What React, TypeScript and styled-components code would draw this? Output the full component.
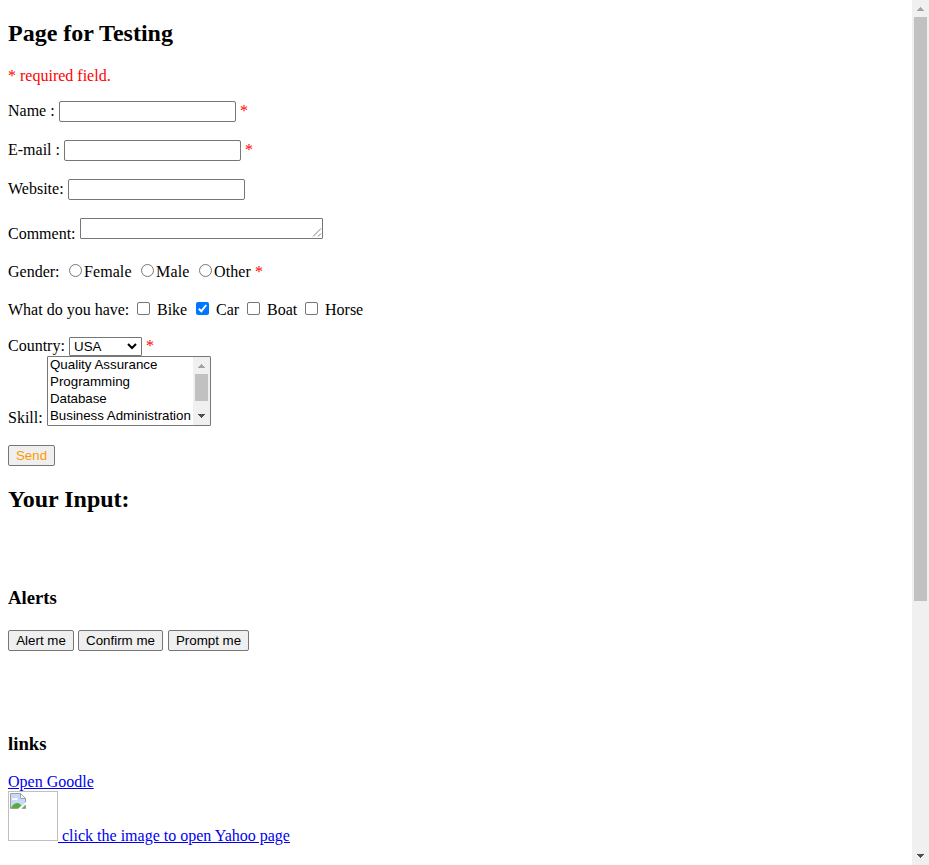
import React from 'react';
import styled, { createGlobalStyle } from 'styled-components';

const GlobalStyle = createGlobalStyle`
  html, body { margin: 0; padding: 0; background: #fff; overflow: hidden; }
  * { box-sizing: border-box; }
`;

const Page = styled.div`
  display: flex;
  width: 929px;
  height: 865px;
  overflow: hidden;
  color: #000;
  background: #fff;
  font: 16px/18px 'Liberation Serif', 'Times New Roman', serif;
`;

const Content = styled.main`
  flex: 1;
  padding: 20px 8px 0;
`;

const Heading = styled.h2`
  margin: 0;
  height: 27px;
  font-size: 24px;
  line-height: 27px;
`;

const SubHeading = styled.h3<{ $gap: number }>`
  margin: ${p => p.$gap}px 0 0;
  height: 20px;
  font-size: 18.72px;
  line-height: 20px;
`;

const Required = styled.p`
  margin: 20px 0 16px;
  color: #f00;
`;

const Row = styled.div<{ $h: number; $gap?: number }>`
  display: flex;
  align-items: flex-start;
  height: ${p => p.$h}px;
  margin-top: ${p => p.$gap ?? 0}px;
`;

const Label = styled.label<{ $w: number; $drop?: number; $track?: number }>`
  flex: none;
  width: ${p => p.$w}px;
  margin-top: ${p => p.$drop ?? 0}px;
  letter-spacing: ${p => p.$track ?? 0}px;
  white-space: nowrap;
`;

const Star = styled.span<{ $drop?: number }>`
  margin: ${p => p.$drop ?? 0}px 0 0 4px;
  color: #f00;
`;

const TextInput = styled.input`
  width: 177px;
  height: 21px;
  padding: 1px 2px;
  border: 1px solid #767676;
  border-radius: 2px;
  background: #fff;
  outline: none;
`;

const CommentBox = styled.div`
  display: flex;
  justify-content: flex-end;
  align-items: flex-end;
  width: 243px;
  height: 21px;
  border: 1px solid #767676;
  border-radius: 1px;
`;

const Radio = styled.input`
  appearance: none;
  flex: none;
  width: 13px;
  height: 13px;
  margin: 1px 2px 0 0;
  border: 1px solid #767676;
  border-radius: 50%;
`;

const CheckBox = styled.span<{ $on?: boolean }>`
  display: flex;
  flex: none;
  width: 13px;
  height: 13px;
  margin: 1px 7px 0 0;
  border: ${p => (p.$on ? 'none' : '1px solid #767676')};
  border-radius: 2px;
  background: ${p => (p.$on ? '#0075ff' : '#fff')};
`;

const Dropdown = styled.div`
  display: flex;
  align-items: center;
  justify-content: space-between;
  width: 73px;
  height: 19px;
  padding: 0 4px;
  border: 1px solid #767676;
  border-radius: 1px;
  font: 13.333px/17px 'Liberation Sans', Arial, sans-serif;
`;

const Caret = styled.svg`
  margin-top: -1px;
`;

const ListBox = styled.div`
  display: flex;
  width: 164px;
  height: 70px;
  border: 1px solid #767676;
  border-radius: 1px;
  font: 13.333px/17px 'Liberation Sans', Arial, sans-serif;
`;

const Options = styled.ul`
  flex: 1;
  margin: 0;
  padding: 0 0 0 2px;
  list-style: none;
  white-space: nowrap;
`;

const Option = styled.li<{ $track: number }>`
  height: 17px;
  line-height: 16px;
  letter-spacing: ${p => p.$track}px;
`;

const Scroll = styled.div`
  display: flex;
  flex-direction: column;
  flex: none;
  width: 17px;
  background: #f0f0f0;
`;

const Thumb = styled.div<{ $h: number }>`
  width: 13px;
  height: ${p => p.$h}px;
  margin: 0 2px auto;
  background: #c1c1c1;
`;

const Button = styled.button<{ $w: number; $color?: string }>`
  flex: none;
  width: ${p => p.$w}px;
  height: 21px;
  padding: 0;
  border: 1px solid #767676;
  border-radius: 2px;
  background: #efefef;
  color: ${p => p.$color ?? '#000'};
  font: 13.333px/17px 'Liberation Sans', Arial, sans-serif;
`;

const Buttons = styled(Row)`
  & > :nth-child(2) { margin: 0 5px 0 4px; }
`;

const Link = styled.a`
  color: #00e;
  text-decoration: underline;
  white-space: pre;
`;

const ImageFrame = styled.span`
  display: flex;
  flex: none;
  width: 50px;
  height: 50px;
  padding: 1px;
  border: 1px solid #c0c0c0;
`;

const Arrow = ({ down = false, color = '#505050' }: { down?: boolean; color?: string }) => (
  <svg width="17" height="17" shapeRendering="crispEdges" fill={color}>
    <path d={down
      ? 'M5 6h7v1h-1v1h-1v1h-1v1h-1v-1h-1v-1h-1v-1h-1z'
      : 'M8 7h1v1h1v1h1v1h1v1h-7v-1h1v-1h1v-1h1z'} />
  </svg>
);

const BrokenImage = () => (
  <svg width="16" height="16" viewBox="0 0 16 16">
    <path d="M.5 .5h10l5 5v4.500l-6 5.500h-9z" fill="#c6d9f7" stroke="#a0a0a0" />
    <path d="M2 7c-.4-2 2-2.700 2.600-1.300C5.500 4 8 5 7.500 7z" fill="#fff" />
    <path d="M1 15c1-3 4-5 6.500-5 2 0 3 1.500 4 2.500L9 15z" fill="#5bad3a" />
    <path d="M8 16l8-7v2.500L11 16z" fill="#fff" />
    <path d="M12 15.500h3.500V12z" fill="#5bad3a" stroke="#a0a0a0" />
    <path d="M10.500.500v5h5z" fill="#fff" stroke="#a0a0a0" />
  </svg>
);

const skills = [
  { name: 'Quality Assurance', track: 0 },
  { name: 'Programming', track: 0 },
  { name: 'Database', track: -0.05 },
  { name: 'Business Administration', track: -0.03 },
];

export default function App() {
  return (
    <>
      <GlobalStyle />
      <Page>
        <Content>
          <Heading>Page for Testing</Heading>
          <Required>* required field.</Required>
          <Row $h={21}>
            <Label $w={51} $drop={1}>Name :</Label><TextInput /><Star $drop={1}>*</Star>
          </Row>
          <Row $h={21} $gap={18}>
            <Label $w={56} $drop={1}>E-mail :</Label><TextInput /><Star $drop={1}>*</Star>
          </Row>
          <Row $h={21} $gap={18}>
            <Label $w={60} $drop={1}>Website:</Label><TextInput />
          </Row>
          <Row $h={21} $gap={18}>
            <Label $w={72} $drop={7}>Comment:</Label>
            <CommentBox>
              <svg width="11" height="11" stroke="#808080" fill="none">
                <path d="M2 9.500l8-8M7 9.500l3-3" />
              </svg>
            </CommentBox>
          </Row>
          <Row $h={18} $gap={24}>
            <Label $w={61}>Gender:</Label>
            <Radio type="radio" name="gender" /><Label $w={57} $track={0.08}>Female</Label>
            <Radio type="radio" name="gender" /><Label $w={43} $track={0.15}>Male</Label>
            <Radio type="radio" name="gender" /><Label $w={37} $track={0.1}>Other</Label>
            <Star>*</Star>
          </Row>
          <Row $h={18} $gap={20}>
            <Label $w={129}>What do you have:</Label>
            <CheckBox /><Label $w={39}>Bike</Label>
            <CheckBox $on>
              <svg width="13" height="13" fill="none" stroke="#fff" strokeWidth="2">
                <path d="M2.800 6.800l2.500 2.500L10.200 3" />
              </svg>
            </CheckBox>
            <Label $w={31}>Car</Label>
            <CheckBox /><Label $w={38}>Boat</Label>
            <CheckBox /><Label $w={40}>Horse</Label>
          </Row>
          <Row $h={19} $gap={18}>
            <Label $w={61}>Country:</Label>
            <Dropdown>
              USA
              <Caret width="10" height="8" fill="none" stroke="#000" strokeWidth="2">
                <path d="M1 2l4 4 4-4" />
              </Caret>
            </Dropdown>
            <Star>*</Star>
          </Row>
          <Row $h={70}>
            <Label $w={39} $drop={53}>Skill:</Label>
            <ListBox>
              <Options>
                {skills.map(s => <Option key={s.name} $track={s.track}>{s.name}</Option>)}
              </Options>
              <Scroll>
                <Arrow color="#a3a3a3" /><Thumb $h={27} /><Arrow down />
              </Scroll>
            </ListBox>
          </Row>
          <Row $h={21} $gap={19}>
            <Button $w={47} $color="#ff9800">Send</Button>
          </Row>
          <Row $h={27} $gap={20}><Heading>Your Input:</Heading></Row>
          <SubHeading $gap={75}>Alerts</SubHeading>
          <Buttons $h={21} $gap={22}>
            <Button $w={66}>Alert me</Button>
            <Button $w={85}>Confirm me</Button>
            <Button $w={81}>Prompt me</Button>
          </Buttons>
          <SubHeading $gap={83}>links</SubHeading>
          <Row $h={18} $gap={19}><Link href="#">Open Goodle</Link></Row>
          <Row $h={54}>
            <ImageFrame><BrokenImage /></ImageFrame>
            <Label as="span" $w={240} $drop={36}><Link href="#"> click the image to open Yahoo page</Link></Label>
          </Row>
        </Content>
        <Scroll>
          <Arrow color="#a3a3a3" /><Thumb $h={584} /><Arrow down />
        </Scroll>
      </Page>
    </>
  );
}
